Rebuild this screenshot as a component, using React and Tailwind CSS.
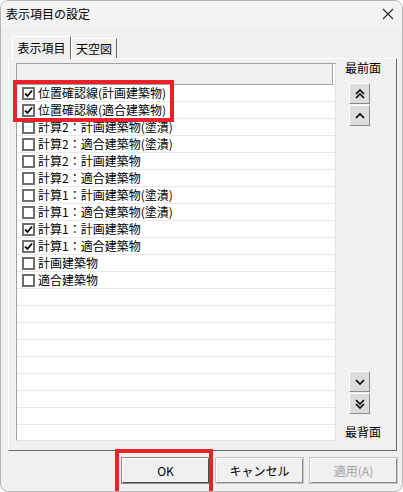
import React from "react";

const items = [
  ["位置確認線(計画建築物)", true],
  ["位置確認線(適合建築物)", true],
  ["計算2：計画建築物(塗潰)", false],
  ["計算2：適合建築物(塗潰)", false],
  ["計算2：計画建築物", false],
  ["計算2：適合建築物", false],
  ["計算1：計画建築物(塗潰)", false],
  ["計算1：適合建築物(塗潰)", false],
  ["計算1：計画建築物", true],
  ["計算1：適合建築物", true],
  ["計画建築物", false],
  ["適合建築物", false],
];

const rows = [...items, ...Array(10).fill(null)];

function CheckBox({ checked }) {
  return (
    <div className="w-[13px] h-[13px] border-2 border-[#6e6e6e] bg-white flex items-center justify-center shrink-0">
      {checked && (
        <svg width="9" height="9" viewBox="0 0 9 9">
          <path d="M1 4.5 L3.5 7 L8 1.5" fill="none" stroke="#000" strokeWidth="1.8" />
        </svg>
      )}
    </div>
  );
}

function Chevron({ dir, double }) {
  const up = dir === "up";
  const one = (y) =>
    up ? `M1 ${y + 4} L5 ${y} L9 ${y + 4}` : `M1 ${y} L5 ${y + 4} L9 ${y}`;
  return (
    <svg width="10" height="10" viewBox="0 0 10 10">
      {double ? (
        <>
          <path d={one(1)} fill="none" stroke="#000" strokeWidth="1.6" />
          <path d={one(5)} fill="none" stroke="#000" strokeWidth="1.6" />
        </>
      ) : (
        <path d={one(3)} fill="none" stroke="#000" strokeWidth="1.6" />
      )}
    </svg>
  );
}

function OrderButton({ dir, double }) {
  return (
    <button className="w-[21px] h-[21px] bg-[#dcdcdc] border border-t-white border-l-white border-r-[#8a8a8a] border-b-[#8a8a8a] flex items-center justify-center">
      <Chevron dir={dir} double={double} />
    </button>
  );
}

function DialogButton({ children, disabled, isDefault }) {
  return (
    <button
      className={`w-[87px] h-[25px] bg-[#f0f0f0] border border-t-white border-l-white text-[12px] ${
        isDefault
          ? "border-r-[#505050] border-b-[#505050] outline outline-1 outline-[#8a8a8a]"
          : "border-r-[#8a8a8a] border-b-[#8a8a8a] outline outline-1 outline-[#c4c4c4]"
      } ${disabled ? "text-[#a0a0a0]" : "text-black"}`}
    >
      {children}
    </button>
  );
}

export default function App() {
  return (
    <div className="relative w-[403px] h-[492px] bg-[#f0f0f0] border border-[#b5b5b5] rounded-[8px] overflow-hidden flex flex-col font-['Noto_Sans_CJK_JP','Noto_Sans',sans-serif] text-black select-none">
      {/* title bar */}
      <div className="h-[26px] bg-[#f3f3f3] flex items-center justify-between pl-[5px] pr-[8px] shrink-0">
        <span className="text-[12px] leading-none">表示項目の設定</span>
        <svg width="12" height="12" viewBox="0 0 12 12">
          <path d="M1 1 L11 11 M11 1 L1 11" stroke="#222" strokeWidth="1.1" />
        </svg>
      </div>

      {/* tabs */}
      <div className="flex items-end pl-[11px] mt-[8px] h-[23px] shrink-0">
        <div className="relative z-10 h-[23px] w-[59px] bg-[#f0f0f0] border border-b-0 border-t-white border-l-white border-r-[#696969] flex items-center justify-center text-[12px] -mb-px pb-[1px]">
          表示項目
        </div>
        <div className="h-[20px] w-[46px] bg-[#f0f0f0] border border-b-0 border-t-white border-l-white border-r-[#696969] flex items-center justify-center text-[12px]">
          天空図
        </div>
      </div>

      {/* tab panel */}
      <div className="ml-[7px] mr-[5px] h-[393px] border border-t-white border-l-white border-r-[#696969] border-b-[#696969] flex pl-[7px] pt-[4px] pb-[9px] shrink-0">
        <div className="w-[320px] h-full bg-white border border-t-[#a0a0a0] border-l-[#a0a0a0] border-r-[#e3e3e3] border-b-[#e3e3e3] overflow-hidden flex flex-col">
          <div className="h-[21px] bg-[#f0f0f0] border-b border-[#a0a0a0] border-r border-r-[#a0a0a0] mr-[2px] shrink-0" />
          {rows.map((r, i) => (
            <div
              key={i}
              className="h-[17px] border-b border-[#e8e8e8] flex items-center gap-[3px] pl-[5px] shrink-0"
            >
              {r && (
                <>
                  <CheckBox checked={r[1]} />
                  <span className="text-[12px] leading-none whitespace-nowrap">{r[0]}</span>
                </>
              )}
            </div>
          ))}
        </div>

        {/* order column */}
        <div className="flex-1 flex flex-col">
          <span className="ml-[9px] mt-[-3px] text-[12px] leading-[16px]">最前面</span>
          <div className="ml-[13px] mt-[7px] flex flex-col gap-[1px]">
            <OrderButton dir="up" double />
            <OrderButton dir="up" />
          </div>
          <div className="flex-1" />
          <div className="ml-[13px] flex flex-col gap-[1px]">
            <OrderButton dir="down" />
            <OrderButton dir="down" double />
          </div>
          <span className="ml-[9px] mt-[10px] mb-[1px] text-[12px] leading-[16px]">最背面</span>
        </div>
      </div>

      {/* dialog buttons */}
      <div className="flex justify-end gap-[7px] pr-[5px] mt-[7px]">
        <DialogButton isDefault>OK</DialogButton>
        <DialogButton>キャンセル</DialogButton>
        <DialogButton disabled>適用(A)</DialogButton>
      </div>

      {/* annotation boxes */}
      <div className="absolute left-[12px] top-[79px] w-[161px] h-[42px] border-4 border-[#e8212b] pointer-events-none" />
      <div className="absolute left-[114px] top-[448px] w-[98px] h-[46px] border-4 border-[#e8212b] pointer-events-none" />
    </div>
  );
}
